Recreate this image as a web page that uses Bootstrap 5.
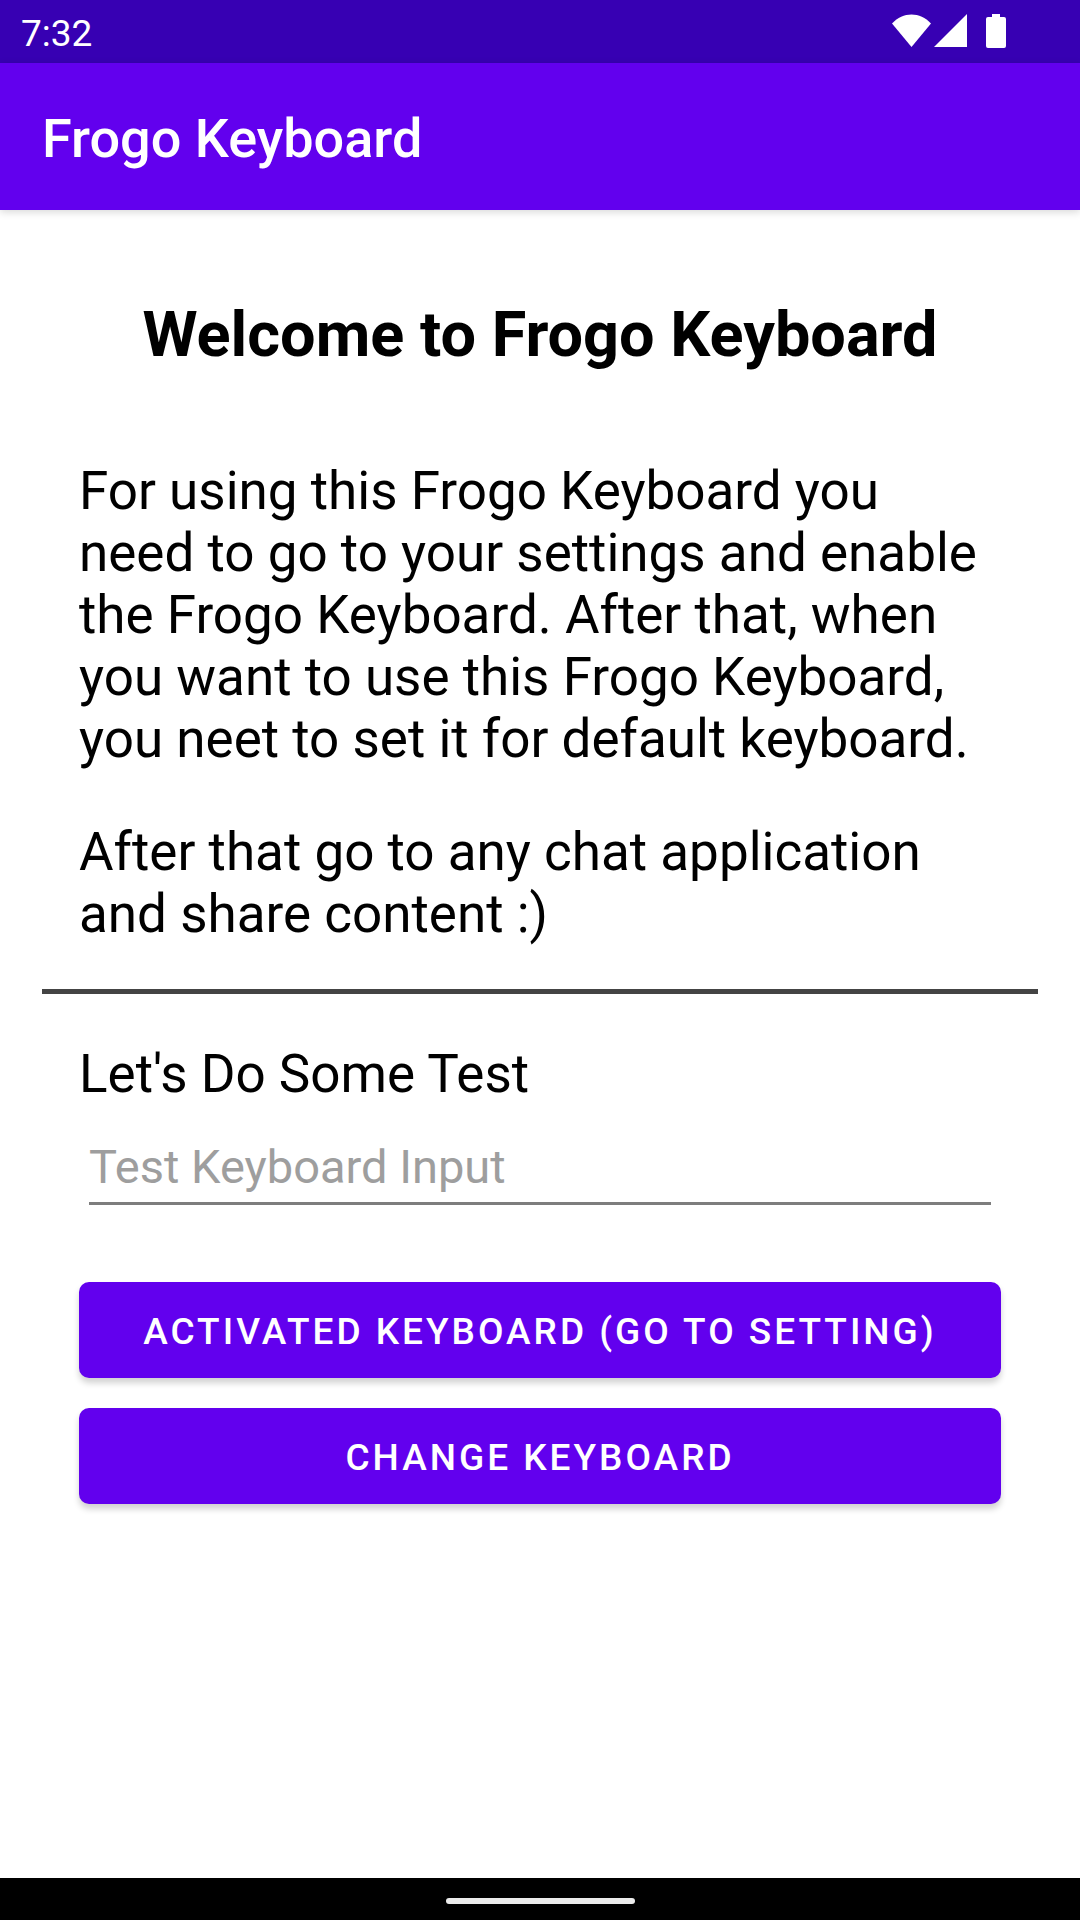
<!DOCTYPE html>
<html lang="en">
<head>
<meta charset="utf-8">
<meta name="viewport" content="width=device-width, initial-scale=1">
<title>Frogo Keyboard</title>
<link rel="stylesheet" href="https://cdn.jsdelivr.net/npm/bootstrap@5.3.0/dist/css/bootstrap.min.css">
<style>
  body { font-family: Roboto, "Liberation Sans", sans-serif; color: #000; }
  .status-bar { background: #3700b3; height: 63px; padding: 0 72px 0 21px; font-size: 37px; line-height: 44px; }
  .app-bar { background: #6200ee; height: 147px; padding: 4px 42px 0; box-shadow: 0 2px 8px rgba(0, 0, 0, .16); }
  .app-title { font-size: 54px; line-height: 62px; font-weight: 500; }
  .screen-body { padding: 88px 42px 40px; }
  .inset { padding: 0 37px; }
  .welcome { font-size: 63px; line-height: 74px; margin-bottom: 88px; }
  .copy { font-size: 53px; line-height: 62px; }
  .copy-gap { margin-bottom: 51px; }
  .divider { height: 5px; background: #444; opacity: 1; border: 0; margin: 44px 0 49px; }
  .test-field { margin: 34px 10px 77px; }
  .test-field .form-control { font-size: 47px; line-height: 55px; padding: 0 0 8px; border-width: 0 0 3px; border-color: #7d7d7d; background: transparent; color: #000; }
  .test-field .form-control::placeholder { color: #9e9e9e; }
  .action { --bs-btn-bg: #6200ee; --bs-btn-border-color: #6200ee; --bs-btn-hover-bg: #5600d2; --bs-btn-color: #fff; --bs-btn-hover-color: #fff;
    height: 96px; padding: 4px 12px 0; border: 0; border-radius: 10px; font-size: 37px; line-height: 44px; font-weight: 500; letter-spacing: 3px; box-shadow: 0 5px 6px rgba(0, 0, 0, .18); }
  .actions { gap: 30px; }
  .nav-strip { background: #000; height: 42px; padding-top: 20px; }
  .pill { width: 189px; height: 6px; background: #ebebeb; }
</style>
</head>
<body class="bg-white">
<div class="d-flex flex-column min-vh-100">
  <div class="status-bar d-flex align-items-center justify-content-between text-white">
    <span class="pt-1">7:32</span>
    <svg width="116" height="36" viewBox="0 0 116 36" fill="#fff" aria-label="Wi-Fi, signal, battery" role="img">
      <path d="M0 9.500C11-2.500 28-2.500 39 9.500L19.500 33Z"/>
      <path d="M42 33 75 0V33Z"/>
      <path d="M100 0h8v3h4a2 2 0 0 1 2 2v27a2 2 0 0 1-2 2H96a2 2 0 0 1-2-2V5a2 2 0 0 1 2-2h4z"/>
    </svg>
  </div>
  <header class="app-bar d-flex align-items-center text-white">
    <h1 class="app-title mb-0">Frogo Keyboard</h1>
  </header>
  <main class="screen-body flex-grow-1">
    <section class="inset">
      <h2 class="welcome fw-bold text-center">Welcome to Frogo Keyboard</h2>
      <p class="copy copy-gap">For using this Frogo Keyboard you need to go to your settings and enable the Frogo Keyboard. After that, when you want to use this Frogo Keyboard, you neet to set it for default keyboard.</p>
      <p class="copy mb-0">After that go to any chat application and share content :)</p>
    </section>
    <hr class="divider">
    <section class="inset">
      <label class="copy d-block" for="testInput">Let's Do Some Test</label>
      <div class="test-field">
        <input id="testInput" type="text" class="form-control rounded-0 shadow-none" placeholder="Test Keyboard Input">
      </div>
      <div class="actions d-grid">
        <button type="button" class="btn action text-uppercase">Activated Keyboard (Go to Setting)</button>
        <button type="button" class="btn action text-uppercase">Change Keyboard</button>
      </div>
    </section>
  </main>
  <div class="nav-strip d-flex justify-content-center">
    <div class="pill rounded-pill"></div>
  </div>
</div>
<script src="https://cdn.jsdelivr.net/npm/bootstrap@5.3.0/dist/js/bootstrap.bundle.min.js"></script>
</body>
</html>
